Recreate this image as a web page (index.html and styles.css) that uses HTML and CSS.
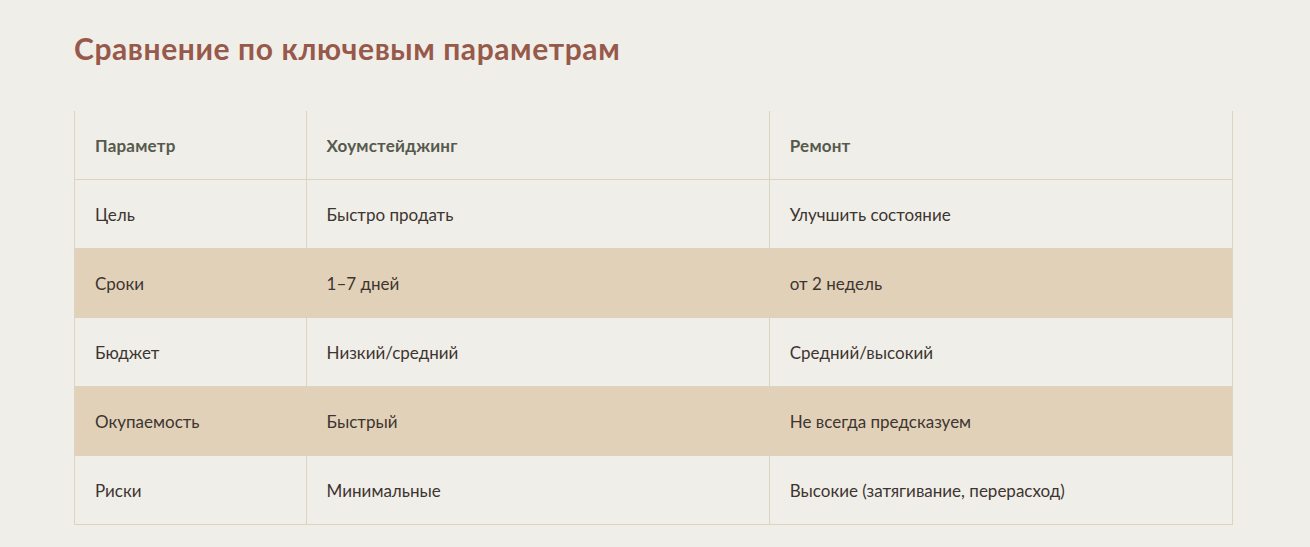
FILE: index.html
```html
<!DOCTYPE html>
<html lang="ru">
<head>
<meta charset="utf-8">
<link rel="stylesheet" href="styles.css">
</head>
<body>
<section class="compare">
  <h2 class="compare__title">Сравнение по ключевым параметрам</h2>
  <table class="compare__table">
    <colgroup>
      <col class="col-param">
      <col class="col-wide">
      <col class="col-wide">
    </colgroup>
    <thead>
      <tr><th>Параметр</th><th>Хоумстейджинг</th><th>Ремонт</th></tr>
    </thead>
    <tbody>
      <tr><td>Цель</td><td>Быстро продать</td><td>Улучшить состояние</td></tr>
      <tr class="alt"><td>Сроки</td><td>1–7 дней</td><td>от 2 недель</td></tr>
      <tr><td>Бюджет</td><td>Низкий/средний</td><td>Средний/высокий</td></tr>
      <tr class="alt"><td>Окупаемость</td><td>Быстрый</td><td>Не всегда предсказуем</td></tr>
      <tr><td>Риски</td><td>Минимальные</td><td>Высокие (затягивание, перерасход)</td></tr>
    </tbody>
  </table>
</section>
</body>
</html>
```
FILE: styles.css
```css
html, body {
  margin: 0;
  padding: 0;
  background: #f0eee9;
}
body {
  font-family: "Lato", "Open Sans", sans-serif;
  color: #3d3530;
}
.compare {
  padding: 30px 77px 0 74px;
}
.compare__title {
  margin: 0 0 45px;
  font-size: 30px;
  line-height: 36px;
  font-weight: 700;
  color: #97594a;
  letter-spacing: 0.6px;
}
.compare__table {
  width: 100%;
  border-collapse: collapse;
  table-layout: fixed;
}
.col-param { width: 20%; }
.col-wide { width: 40%; }
.compare__table th,
.compare__table td {
  text-align: left;
  padding: 0 20px;
  height: 68px;
  font-size: 17px;
  border-left: 1px solid #ddd3c1;
  border-right: 1px solid #ddd3c1;
  border-bottom: 1px solid #ddd3c1;
}
.compare__table th {
  font-weight: 700;
  color: #555a4c;
  letter-spacing: 0.2px;
}
.compare__table tr.alt td {
  background: #e2d1b9;
  border-bottom-color: #e2d1b9;
}
```
